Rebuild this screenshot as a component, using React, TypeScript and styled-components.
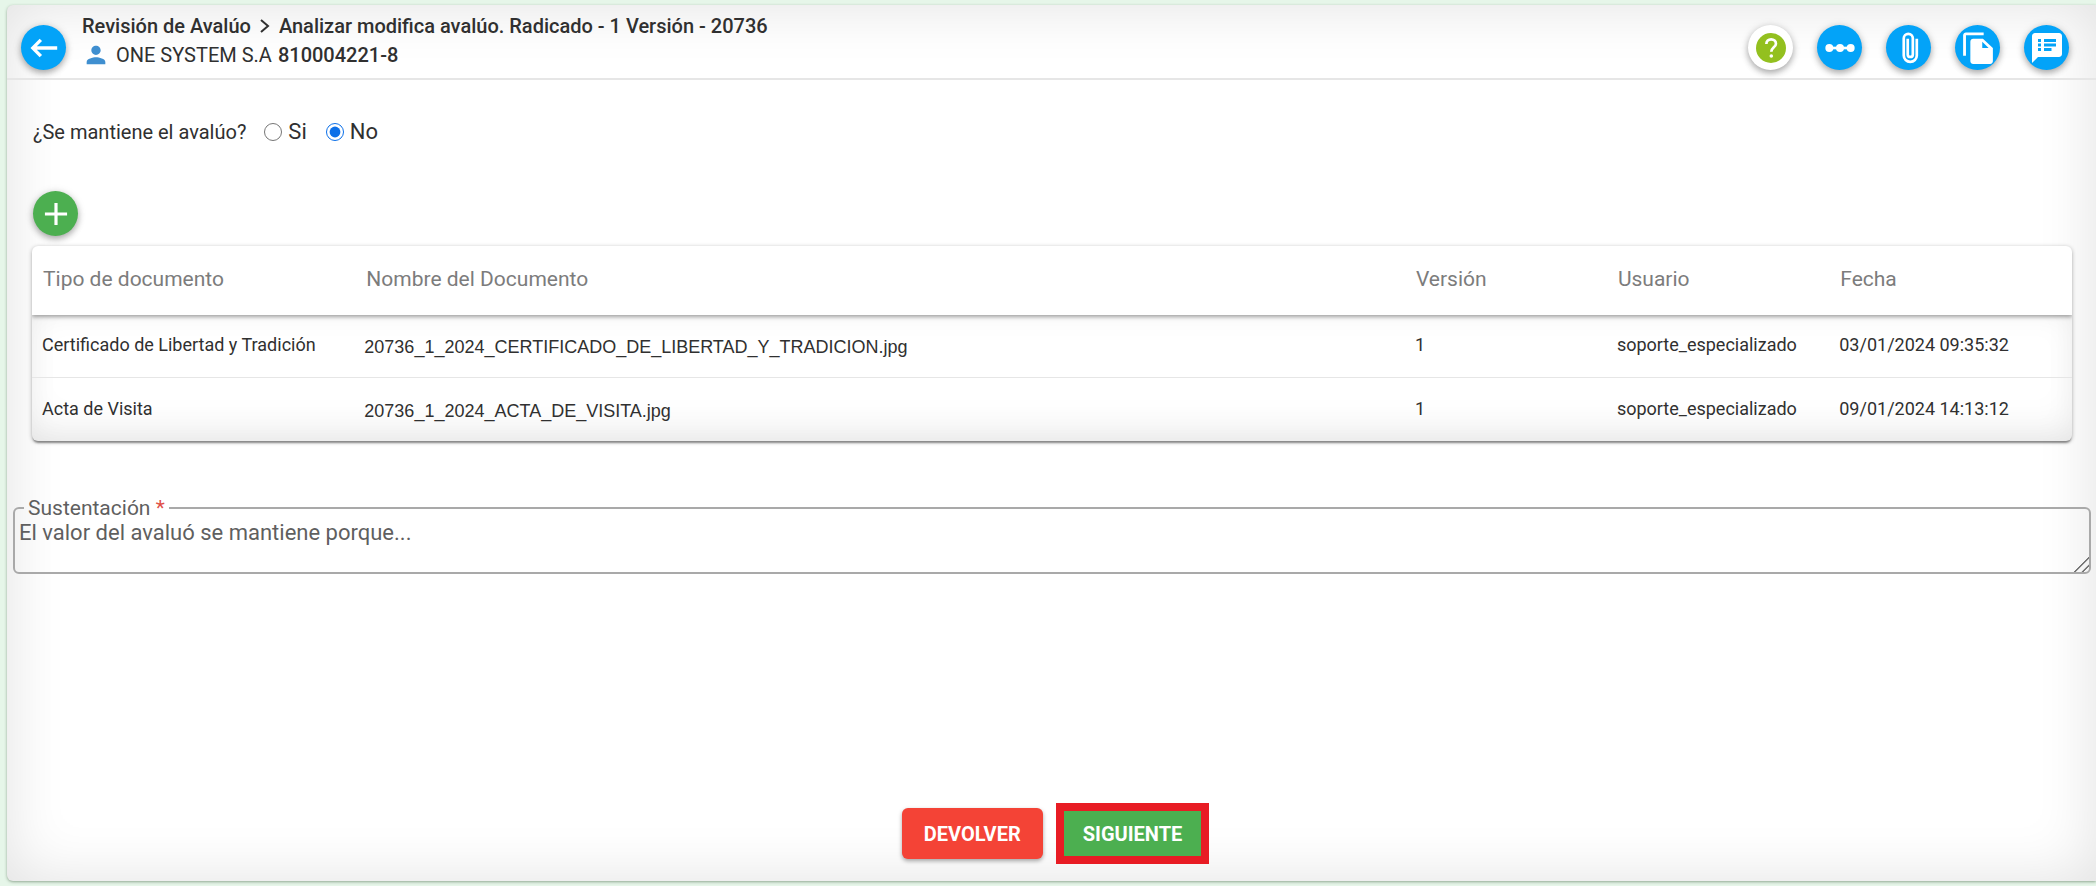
import React, { useState } from "react";
import styled, { createGlobalStyle, css } from "styled-components";

const GlobalStyle = createGlobalStyle`
  *, *::before, *::after { box-sizing: border-box; }
  body {
    margin: 0;
    background: #e6f6e9;
    color: #303030;
    font-family: Roboto, "Liberation Sans", sans-serif;
  }
`;

const Page = styled.div`
  display: flex;
  min-height: 100vh;
  padding: 5px 0 5px 7px;
`;

const Panel = styled.main`
  flex: 1;
  display: flex;
  flex-direction: column;
  min-width: 0;
  background: #fff;
  border-radius: 6px 0 0 6px;
  box-shadow: inset 0 0 60px rgba(0, 0, 0, 0.12), 0 1px 3px rgba(60, 90, 60, 0.5);
`;

const Header = styled.header`
  display: flex;
  align-items: flex-end;
  gap: 16px;
  height: 75px;
  padding: 0 27px 8px 14px;
  border-bottom: 2px solid #e6e6e6;
`;

const Titles = styled.div`
  flex: 1;
  display: flex;
  flex-direction: column;
`;

const Breadcrumb = styled.h1`
  display: flex;
  align-items: center;
  gap: 8px;
  margin: 0;
  font-size: 20px;
  line-height: 28px;
  font-weight: 500;
`;

const Client = styled.p`
  display: flex;
  align-items: center;
  gap: 6px;
  margin: 0;
  font-size: 20px;
  line-height: 30px;

  strong { font-weight: 500; }
`;

const Actions = styled.nav`
  display: flex;
  gap: 24px;
`;

const tones = {
  blue: css`background: #03a3f8; color: #fff;`,
  green: css`background: #4caf50; color: #fff;`,
  white: css`background: #fff; color: #93c01f;`,
};

const RoundButton = styled.button<{ $tone: keyof typeof tones }>`
  display: grid;
  place-items: center;
  flex: none;
  width: 45px;
  height: 45px;
  padding: 0;
  border: 0;
  border-radius: 50%;
  cursor: pointer;
  box-shadow: 0 3px 6px rgba(0, 0, 0, 0.28), 0 1px 10px rgba(0, 0, 0, 0.12);
  ${(p) => tones[p.$tone]}
`;

const Question = styled.fieldset`
  display: flex;
  align-items: center;
  margin: 0;
  padding: 38px 26px 0;
  border: 0;
  font-size: 20px;
  line-height: 28px;
`;

const QuestionText = styled.span`
  margin-right: 18px;
`;

const Option = styled.label`
  display: flex;
  align-items: center;
  gap: 6px;
  margin-right: 19px;
  font-size: 22px;

  input {
    width: 18px;
    height: 18px;
    margin: 0;
    accent-color: #0b6fe8;
  }
`;

const Documents = styled.section`
  display: flex;
  flex-direction: column;
  align-items: flex-start;
  gap: 10px;
  padding: 45px 24px 0 25px;
`;

const AddSlot = styled.div`
  padding-left: 1px;
`;

const Card = styled.div`
  width: 100%;
  border-radius: 6px;
  overflow: hidden;
  background: #fff;
  box-shadow: 0 3px 2px -1px rgba(0, 0, 0, 0.35), 0 1px 4px rgba(0, 0, 0, 0.3);
`;

const Table = styled.table`
  width: 100%;
  table-layout: fixed;
  border-collapse: separate;
  border-spacing: 0;
  text-align: left;

  thead {
    box-shadow: 0 2px 4px rgba(0, 0, 0, 0.35);
  }
  tbody {
    box-shadow: inset 0 -20px 40px -12px rgba(0, 0, 0, 0.08),
      inset 0 0 30px rgba(0, 0, 0, 0.05);
  }
`;

const HeadCell = styled.th<{ $width: string }>`
  width: ${(p) => p.$width};
  height: 69px;
  padding: 0 0 4px 11px;
  color: #7c7c7c;
  font-size: 21px;
  line-height: 28px;
  font-weight: 400;
`;

const Cell = styled.td<{ $file?: boolean }>`
  height: 63px;
  padding: ${(p) => (p.$file ? "2px 0 0 9px" : "0 0 2px 10px")};
  font-size: 18px;
  line-height: 28px;
  white-space: nowrap;
  ${(p) => p.$file && css`font-family: "Liberation Sans", Arial, sans-serif;`}

  tr:not(:last-child) > & {
    border-bottom: 1px solid #e6e6e6;
  }
`;

const Field = styled.fieldset`
  min-width: 0;
  margin: 56px 5px 0 6px;
  padding: 0;
  border: 2px solid #a9a9a9;
  border-radius: 6px;
  color: #5f5f5f;
`;

const Legend = styled.legend`
  margin-left: 9px;
  padding: 0 4px;
  font-size: 21px;
  line-height: 22px;

  span { color: #e05048; }
`;

const TextArea = styled.textarea`
  display: block;
  width: 100%;
  height: 53px;
  padding: 0 4px;
  border: 0;
  outline: 0;
  background: transparent;
  resize: vertical;
  color: inherit;
  font-family: inherit;
  font-size: 22px;
  line-height: 28px;

  &::-webkit-resizer {
    background: linear-gradient(
      135deg,
      transparent 48%,
      #777 50%,
      #777 55%,
      transparent 57%,
      transparent 73%,
      #777 75%,
      #777 80%,
      transparent 82%
    );
  }
`;

const Footer = styled.footer`
  display: flex;
  justify-content: center;
  align-items: center;
  gap: 13px;
  margin-top: auto;
  padding: 24px 0 17px 8px;
`;

const ActionButton = styled.button<{ $kind: "back" | "next" }>`
  color: #fff;
  font-family: inherit;
  font-size: 20px;
  line-height: 28px;
  font-weight: 700;
  cursor: pointer;

  ${(p) =>
    p.$kind === "back"
      ? css`
          height: 51px;
          padding: 0 22px;
          border: 0;
          border-radius: 6px;
          background: #f44336;
          box-shadow: 0 2px 4px rgba(0, 0, 0, 0.35);
        `
      : css`
          height: 61px;
          padding: 0 19px;
          border: 8px solid #e81c24;
          background: #4caf50;
        `}
`;

type IconProps = { size: number; children: React.ReactNode; color?: string };
const Icon = ({ size, color = "currentColor", children }: IconProps) => (
  <svg width={size} height={size} viewBox="0 0 24 24" fill={color} aria-hidden="true">
    {children}
  </svg>
);

const documents = [
  {
    type: "Certificado de Libertad y Tradición",
    file: "20736_1_2024_CERTIFICADO_DE_LIBERTAD_Y_TRADICION.jpg",
    version: "1",
    user: "soporte_especializado",
    date: "03/01/2024 09:35:32",
  },
  {
    type: "Acta de Visita",
    file: "20736_1_2024_ACTA_DE_VISITA.jpg",
    version: "1",
    user: "soporte_especializado",
    date: "09/01/2024 14:13:12",
  },
];

const columns = [
  { title: "Tipo de documento", width: "15.85%" },
  { title: "Nombre del Documento", width: "51.45%" },
  { title: "Versión", width: "9.9%" },
  { title: "Usuario", width: "10.9%" },
  { title: "Fecha", width: "11.9%" },
];

export default function App() {
  const [keep, setKeep] = useState("No");

  return (
    <>
      <GlobalStyle />
      <Page>
        <Panel>
          <Header>
            <RoundButton $tone="blue" aria-label="Volver">
              <Icon size={36}>
                <path d="M20.800 10.900H7.200l3.500-3.500L9.100 5.900 3 12l6.100 6.100 1.600-1.500-3.500-3.500h13.600z" />
              </Icon>
            </RoundButton>
            <Titles>
              <Breadcrumb>
                <span>Revisión de Avalúo</span>
                <svg width="12" height="14" viewBox="0 0 12 14" fill="none" stroke="currentColor" strokeWidth="2" aria-hidden="true">
                  <path d="M2 1l7 6-7 6" />
                </svg>
                <span>Analizar modifica avalúo. Radicado - 1 Versión - 20736</span>
              </Breadcrumb>
              <Client>
                <Icon size={28} color="#3f8fd0">
                  <path d="M12 12c2.200 0 4-1.800 4-4s-1.800-4-4-4-4 1.800-4 4 1.800 4 4 4zm0 2c-2.700 0-8 1.300-8 4v2h16v-2c0-2.700-5.300-4-8-4z" />
                </Icon>
                <span>ONE SYSTEM S.A</span>
                <strong>810004221-8</strong>
              </Client>
            </Titles>
            <Actions aria-label="Acciones">
              <RoundButton $tone="white" aria-label="Ayuda">
                <Icon size={36}>
                  <circle cx="12" cy="12" r="10" />
                  <path d="M8.900 9.300c0-2 1.400-3.100 3.200-3.100s3.200 1.200 3.200 2.900c0 2.400-3.100 2.500-3.100 5.400" fill="none" stroke="#fff" strokeWidth="1.800" />
                  <circle cx="12.200" cy="17.300" r="1.200" fill="#fff" />
                </Icon>
              </RoundButton>
              <RoundButton $tone="blue" aria-label="Más opciones">
                <Icon size={32}>
                  <circle cx="4" cy="12" r="3" />
                  <circle cx="12" cy="12" r="3" />
                  <circle cx="20" cy="12" r="3" />
                  <path d="M4 11h16v2H4z" />
                </Icon>
              </RoundButton>
              <RoundButton $tone="blue" aria-label="Adjuntos">
                <Icon size={34}>
                  <path
                    d="M17.500 5.500v11.800c0 2.500-2 4.500-4.600 4.500s-4.600-2-4.600-4.500V5.200c0-1.800 1.400-3.200 3.200-3.200s3.200 1.400 3.200 3.200v11.300c0 1-.8 1.800-1.800 1.800s-1.800-.8-1.800-1.800V5.500"
                    fill="none"
                    stroke="currentColor"
                    strokeWidth="1.900"
                  />
                </Icon>
              </RoundButton>
              <RoundButton $tone="blue" aria-label="Copiar">
                <Icon size={34}>
                  <path d="M16 1H3.500C2.400 1 1.500 1.900 1.500 3v14.500h2V3H16zM15.500 5.500h-7c-1 0-1.900.9-1.900 2v13.800c0 1.100.9 2 2 2h11.900c1.100 0 2-.9 2-2V12zM15 12V7.500l4.500 4.500z" />
                </Icon>
              </RoundButton>
              <RoundButton $tone="blue" aria-label="Comentarios">
                <Icon size={36}>
                  <path d="M20 2H4c-1.100 0-2 .9-2 2v18l4-4h14c1.100 0 2-.9 2-2V4c0-1.100-.9-2-2-2zM8 14H6v-2h2zm0-3H6V9h2zm0-3H6V6h2zm7 6h-5v-2h5zm3-3h-8V9h8zm0-3h-8V6h8z" />
                </Icon>
              </RoundButton>
            </Actions>
          </Header>

          <Question>
            <QuestionText>¿Se mantiene el avalúo?</QuestionText>
            {["Si", "No"].map((value) => (
              <Option key={value}>
                <input
                  type="radio"
                  name="keep"
                  value={value}
                  checked={keep === value}
                  onChange={() => setKeep(value)}
                />
                {value}
              </Option>
            ))}
          </Question>

          <Documents>
            <AddSlot>
              <RoundButton $tone="green" aria-label="Agregar documento">
                <Icon size={38}>
                  <path d="M19 13h-6v6h-2v-6H5v-2h6V5h2v6h6z" />
                </Icon>
              </RoundButton>
            </AddSlot>
            <Card>
              <Table>
                <thead>
                  <tr>
                    {columns.map((c) => (
                      <HeadCell key={c.title} $width={c.width} scope="col">{c.title}</HeadCell>
                    ))}
                  </tr>
                </thead>
                <tbody>
                  {documents.map((d) => (
                    <tr key={d.file}>
                      <Cell>{d.type}</Cell>
                      <Cell $file>{d.file}</Cell>
                      <Cell>{d.version}</Cell>
                      <Cell>{d.user}</Cell>
                      <Cell>{d.date}</Cell>
                    </tr>
                  ))}
                </tbody>
              </Table>
            </Card>
          </Documents>

          <Field>
            <Legend>
              <label htmlFor="support">Sustentación <span>*</span></label>
            </Legend>
            <TextArea id="support" required defaultValue="El valor del avaluó se mantiene porque..." />
          </Field>

          <Footer>
            <ActionButton $kind="back">DEVOLVER</ActionButton>
            <ActionButton $kind="next">SIGUIENTE</ActionButton>
          </Footer>
        </Panel>
      </Page>
    </>
  );
}
